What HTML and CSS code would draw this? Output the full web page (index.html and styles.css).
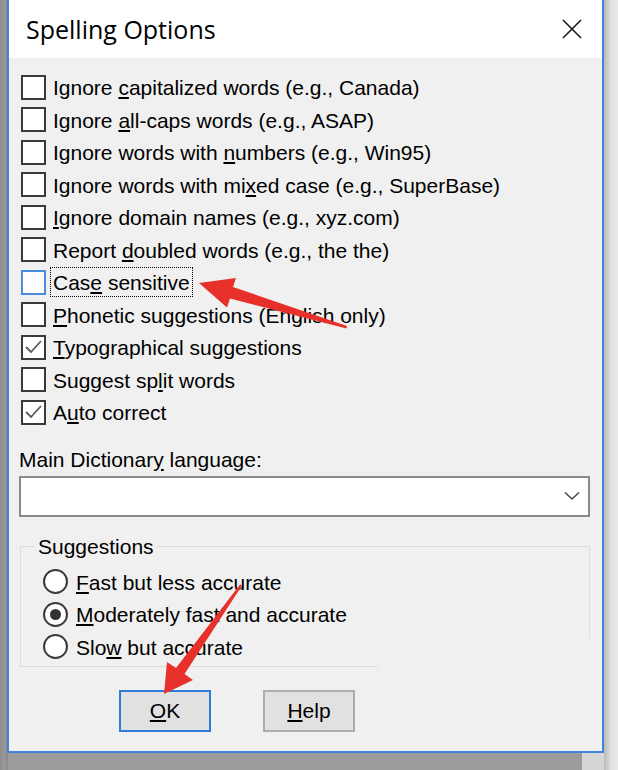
FILE: index.html
```html
<!DOCTYPE html>
<html>
<head>
    <title>Spelling Options</title>
    <link rel="stylesheet" href="styles.css">
</head>
<body>
    <div class="dialog">
        <div class="titlebar">
            <span class="title">Spelling Options</span>
            <svg class="close" width="20" height="20" viewBox="0 0 20 20">
                <path d="M1 1 L19 19 M19 1 L1 19" stroke="#1a1a1a" stroke-width="1.6" fill="none"/>
            </svg>
        </div>

        <div class="content">
            <div class="options">
                <div class="opt"><span class="box"></span><span class="lbl">Ignore <u>c</u>apitalized words (e.g., Canada)</span></div>
                <div class="opt"><span class="box"></span><span class="lbl">Ignore <u>a</u>ll-caps words (e.g., ASAP)</span></div>
                <div class="opt"><span class="box"></span><span class="lbl">Ignore words with <u>n</u>umbers (e.g., Win95)</span></div>
                <div class="opt"><span class="box"></span><span class="lbl">Ignore words with mi<u>x</u>ed case (e.g., SuperBase)</span></div>
                <div class="opt"><span class="box"></span><span class="lbl"><u>I</u>gnore domain names (e.g., xyz.com)</span></div>
                <div class="opt"><span class="box"></span><span class="lbl">Report <u>d</u>oubled words (e.g., the the)</span></div>
                <div class="opt"><span class="box focus"></span><span class="lbl focused">Cas<u>e</u> sensitive</span></div>
                <div class="opt"><span class="box"></span><span class="lbl"><u>P</u>honetic suggestions (English only)</span></div>
                <div class="opt"><span class="box"><svg width="21" height="21" viewBox="0 0 21 21"><polyline points="3,10 8,15 18,4" stroke="#5a5a5a" stroke-width="1.8" fill="none"/></svg></span><span class="lbl"><u>T</u>ypographical suggestions</span></div>
                <div class="opt"><span class="box"></span><span class="lbl">Suggest sp<u>l</u>it words</span></div>
                <div class="opt"><span class="box"><svg width="21" height="21" viewBox="0 0 21 21"><polyline points="3,10 8,15 18,4" stroke="#5a5a5a" stroke-width="1.8" fill="none"/></svg></span><span class="lbl">A<u>u</u>to correct</span></div>
            </div>

            <div class="field-label">Main Dictionar<u>y</u> language:</div>
            <div class="combo">
                <svg width="16" height="10" viewBox="0 0 16 10">
                    <polyline points="1,1.5 8,8 15,1.5" stroke="#4a4a4a" stroke-width="1.6" fill="none"/>
                </svg>
            </div>

            <div class="group">
                <span class="group-title">Suggestions</span>
                <div class="opt"><span class="radio"></span><span class="lbl"><u>F</u>ast but less accurate</span></div>
                <div class="opt"><span class="radio on"></span><span class="lbl"><u>M</u>oderately fast and accurate</span></div>
                <div class="opt"><span class="radio"></span><span class="lbl">Slo<u>w</u> but accurate</span></div>
            </div>

            <div class="buttons">
                <div class="btn default"><u>O</u>K</div>
                <div class="btn"><u>H</u>elp</div>
            </div>
        </div>
    </div>

    <!-- annotation arrows -->
    <svg class="marks" width="618" height="770" viewBox="0 0 618 770">
        <polygon points="199,283 236,278 233,287 347,326 346.5,328.5 230,298.5 227,307.5" fill="#e8302a"/>
        <polygon points="164,694 193,680 184.5,674 242,585.5 240,584.5 176,668 167,662" fill="#e8302a"/>
    </svg>
</body>
</html>
```

FILE: styles.css
```css
body {
  margin: 0;
  width: 618px;
  height: 770px;
  overflow: hidden;
  position: relative;
  font-family: "Liberation Sans", Arial, sans-serif;
  background: linear-gradient(90deg, #8d8d8d 0, #9a9a9a 5px, #858585 7px, #9c9c9c 8px, #9c9c9c 582px, #d6d6d6 582px, #d6d6d6 604px, #b9b9b9 604px, #e2e2e2 611px, #e9e9e9 100%);
}

.dialog {
  margin-left: 7px;
  width: 597px;
  height: 753px;
  box-sizing: border-box;
  border: 2px solid #3d86db;
  border-top: none;
  background-color: #f0f0f0;
}

.titlebar {
  height: 58px;
  background-color: #fff;
  display: flex;
  align-items: center;
  justify-content: space-between;
  padding: 0 20px 0 17px;
}

.title {
  font-family: "Open Sans", sans-serif;
  font-size: 25px;
  color: #000;
}

.content {
  padding: 13px 0 0 10px;
  font-size: 21px;
  color: #000;
}

u {
  text-decoration-thickness: 1.5px;
  text-underline-offset: 2px;
}

.options {
  margin-left: 2px;
}

.opt {
  height: 32.5px;
  display: flex;
  align-items: center;
}

.box {
  width: 25px;
  height: 25px;
  box-sizing: border-box;
  border: 2px solid #3a3a3a;
  background-color: #fff;
  margin-right: 4px;
  display: flex;
  align-items: center;
  justify-content: center;
}

.box.focus {
  border-color: #4a8be0;
}

.lbl {
  line-height: 24px;
  padding: 3px 2px 1px;
  border: 1px solid transparent;
  white-space: nowrap;
}

.lbl.focused {
  border: 1px dotted #000;
}

.field-label {
  margin-top: 19px;
  line-height: 24px;
}

.combo {
  margin-top: 4px;
  width: 571px;
  height: 41px;
  box-sizing: border-box;
  border: 2px solid #8a8a8a;
  background-color: #fff;
  display: flex;
  align-items: center;
  justify-content: flex-end;
  padding-right: 8px;
}

.group {
  position: relative;
  margin: 29px 0 0 1px;
  width: 570px;
  height: 121px;
  box-sizing: border-box;
  border-top: 1px solid #dcdcdc;
  border-left: 1px solid #dcdcdc;
  padding: 19px 0 0 22px;
}

.group::before {
  content: "";
  position: absolute;
  top: 0;
  right: 0;
  width: 1px;
  height: 92px;
  background-color: #dcdcdc;
}

.group::after {
  content: "";
  position: absolute;
  left: 0;
  bottom: 0;
  width: 357px;
  height: 1px;
  background-color: #dcdcdc;
}

.group-title {
  position: absolute;
  top: -12px;
  left: 14px;
  padding: 0 3px;
  line-height: 24px;
  background-color: #f0f0f0;
}

.group .lbl {
  padding-left: 4px;
}

.radio {
  width: 25px;
  height: 25px;
  box-sizing: border-box;
  border: 2px solid #3a3a3a;
  border-radius: 50%;
  background-color: #fff;
  display: flex;
  align-items: center;
  justify-content: center;
  margin-right: 3px;
}

.radio.on::after {
  content: "";
  width: 11px;
  height: 11px;
  border-radius: 50%;
  background-color: #333;
}

.buttons {
  display: flex;
  gap: 52px;
  margin: 23px 0 0 100px;
}

.btn {
  width: 92px;
  height: 42px;
  box-sizing: border-box;
  border: 2px solid #adadad;
  background-color: #e1e1e1;
  display: flex;
  align-items: center;
  justify-content: center;
}

.btn.default {
  border-color: #2f7bd9;
}

.marks {
  position: absolute;
  top: 0;
  left: 0;
  pointer-events: none;
}
```
